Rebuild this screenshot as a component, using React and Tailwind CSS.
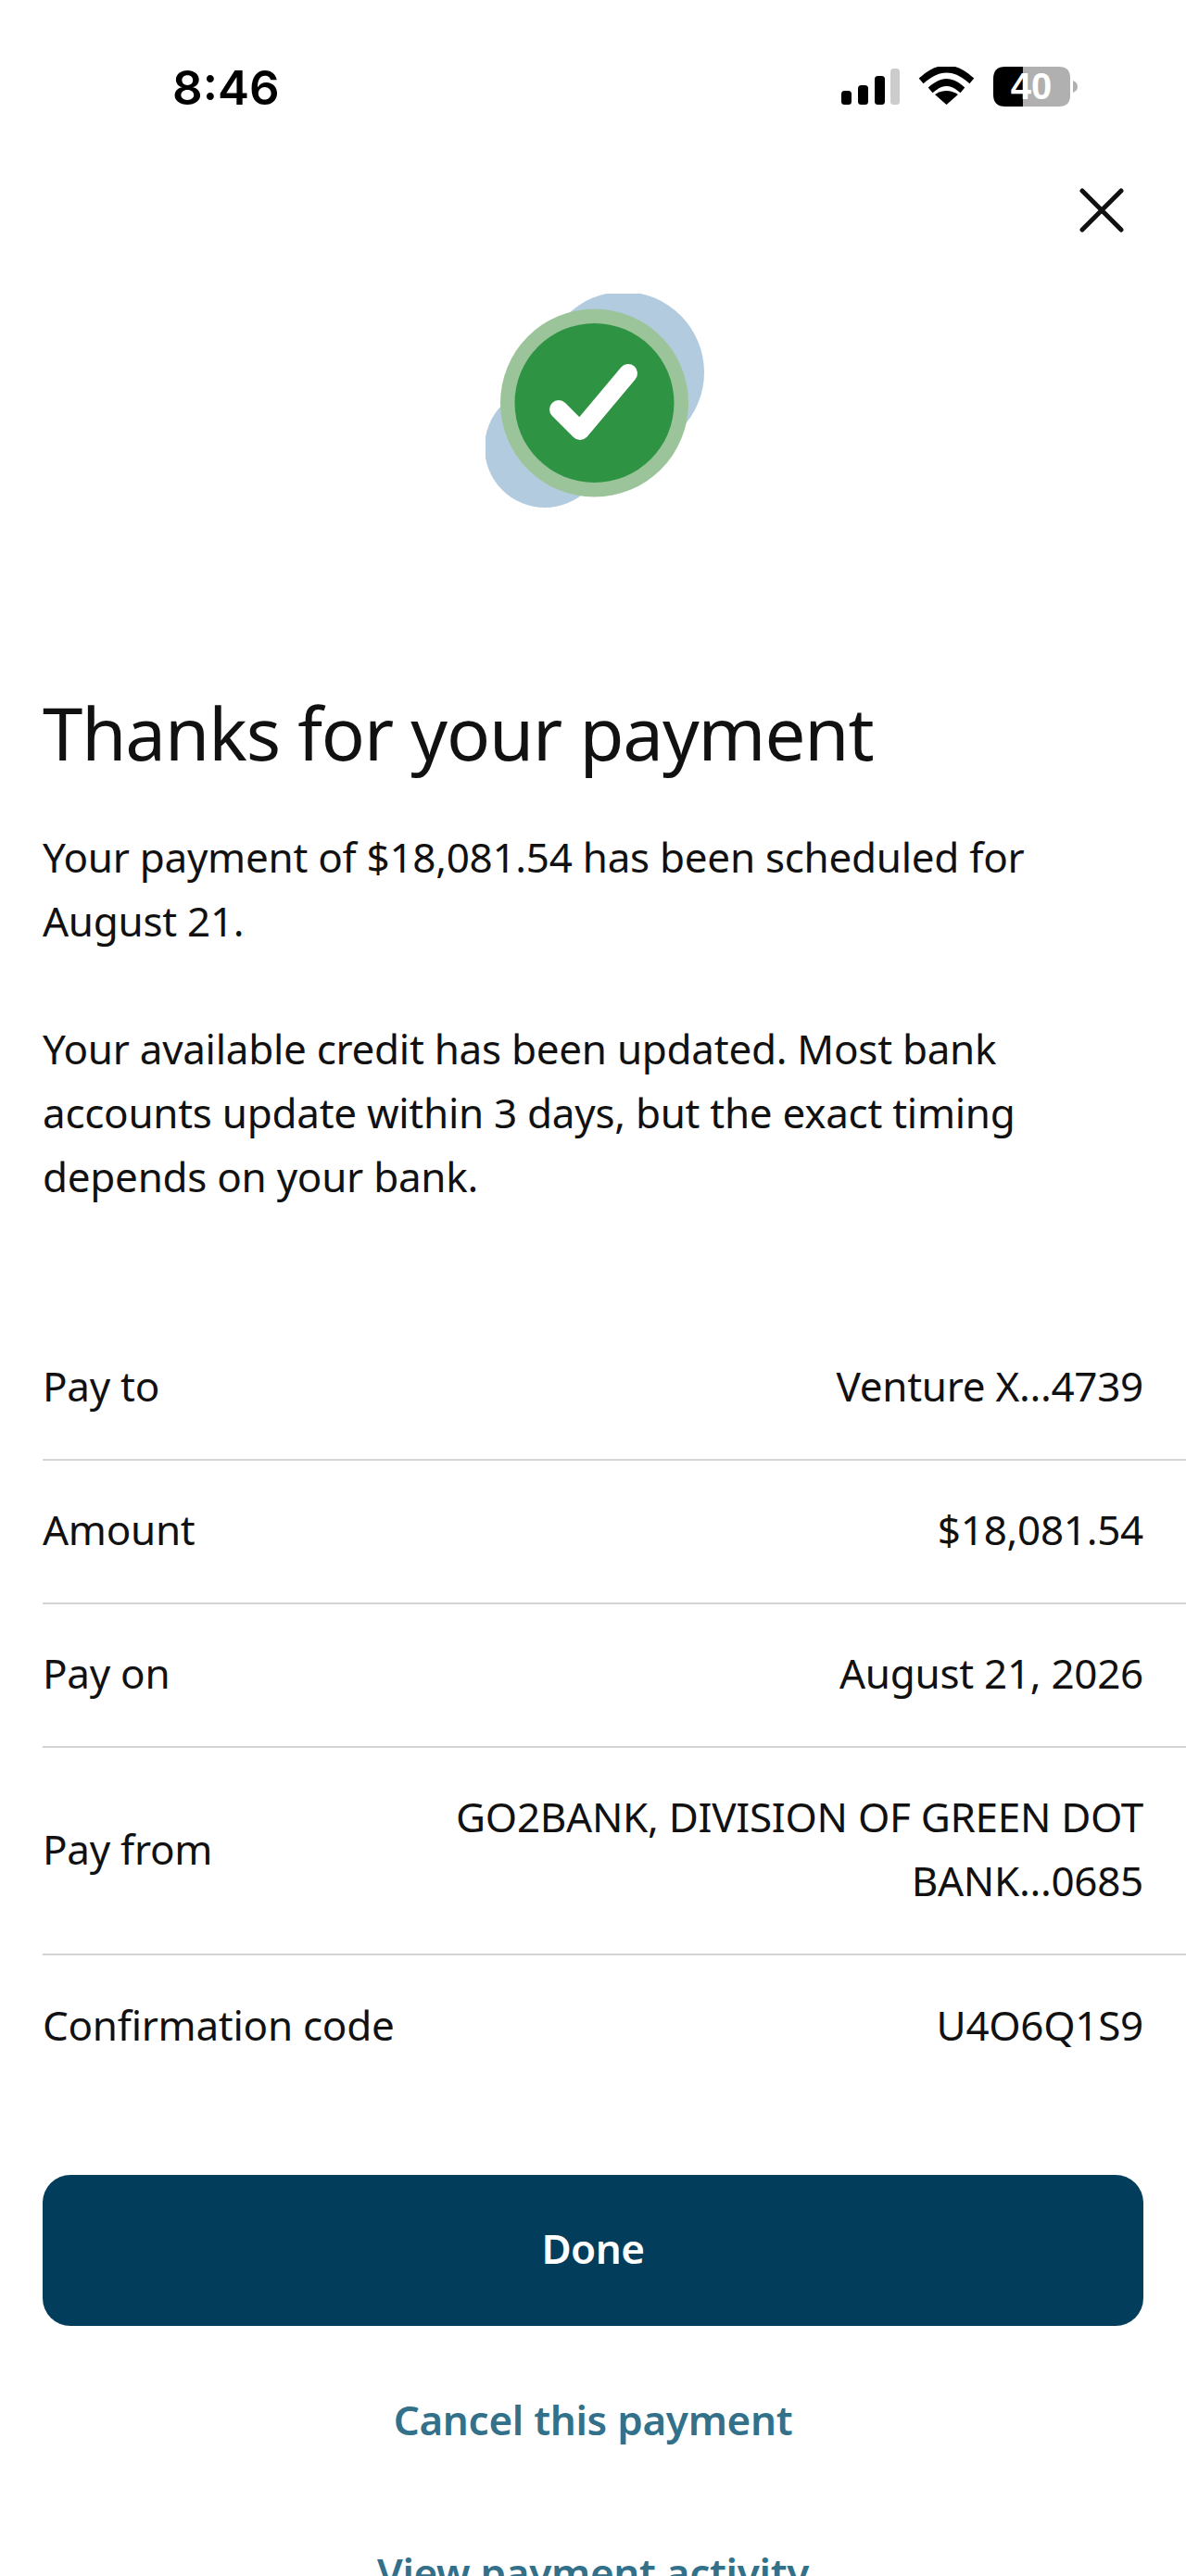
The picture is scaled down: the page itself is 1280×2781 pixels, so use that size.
const rows = [
  { label: "Pay to", value: ["Venture X...4739"], h: "h-[155px]" },
  { label: "Amount", value: ["$18,081.54"], h: "h-[155px]" },
  { label: "Pay on", value: ["August 21, 2026"], h: "h-[155px]" },
  { label: "Pay from", value: ["GO2BANK, DIVISION OF GREEN DOT", "BANK...0685"], h: "h-[224px]" },
  { label: "Confirmation code", value: ["U4O6Q1S9"], h: "h-[155px]" },
];

function StatusIcons() {
  return (
    <svg width="256" height="44" viewBox="908 72 256 44" fill="none">
      <rect x="908" y="98" width="11" height="15" rx="3.5" fill="#000" />
      <rect x="926" y="92" width="11" height="21" rx="3.5" fill="#000" />
      <rect x="944" y="82" width="11" height="31" rx="3.5" fill="#000" />
      <rect x="961" y="74" width="10" height="39" rx="3.5" fill="#cccccc" />
      <path d="M997 85 Q1021.500 64 1046 85" stroke="#000" strokeWidth="7.500" strokeLinecap="square" />
      <path d="M1007 95 Q1021.500 83 1036 95" stroke="#000" strokeWidth="7.500" strokeLinecap="square" />
      <path d="M1021.500 113 L1034 102 Q1021.500 94 1009 102 Z" fill="#000" />
      <path d="M1104 72 H1143 Q1155 72 1155 84 V103 Q1155 115 1143 115 H1104 Z" fill="#b0b0b0" />
      <path d="M1104 72 H1085 Q1072 72 1072 85 V102 Q1072 115 1085 115 H1104 Z" fill="#000" />
      <path d="M1158 87 Q1163 89 1163 93.500 Q1163 98 1158 100 Z" fill="#b0b0b0" />
      <text x="1113" y="107" textAnchor="middle" fontFamily="Liberation Sans, sans-serif" fontWeight="700" fontSize="40" fill="#fff">40</text>
    </svg>
  );
}

function SuccessIcon() {
  return (
    <svg width="240" height="232" viewBox="524 316 240 232">
      <circle cx="673" cy="401" r="87" fill="#b3cbdf" />
      <circle cx="588" cy="482" r="65" fill="#b3cbdf" />
      <circle cx="641.500" cy="434" r="101.500" fill="#9cc49a" />
      <circle cx="641.500" cy="434" r="86" fill="#2f9344" />
      <path d="M603 441 L626 464 L678 402" stroke="#fff" strokeWidth="20" strokeLinecap="round" strokeLinejoin="round" fill="none" />
    </svg>
  );
}

export default function App() {
  return (
    <div className="h-[2781px] w-[1280px] overflow-hidden bg-white font-['Noto_Sans',sans-serif] text-[#111111]">
      <div className="flex h-[116px] items-start justify-between pl-[186px] pr-[116px] pt-[72px]">
        <span className="font-['Inter',sans-serif] text-[51px] font-semibold leading-[46px] text-black">8:46</span>
        <StatusIcons />
      </div>

      <div className="flex justify-end pr-[67px] pt-[87px]">
        <svg width="48" height="48" viewBox="0 0 48 48" fill="none" stroke="#111" strokeWidth="5" strokeLinecap="round">
          <path d="M3 3 L45 45 M45 3 L3 45" />
        </svg>
      </div>

      <div className="flex justify-center pl-[8px] pt-[66px]">
        <SuccessIcon />
      </div>

      <div className="px-[46px] pt-[192px]">
        <h1 className="text-[78px] font-normal leading-[100px] tracking-[-1.1px]">Thanks for your payment</h1>
        <div className="mt-[50px] text-[44px] leading-[69px] tracking-[-0.28px]">
          <p>Your payment of $18,081.54 has been scheduled for<br />August 21.</p>
          <p className="mt-[69px]">Your available credit has been updated. Most bank<br />accounts update within 3 days, but the exact timing<br />depends on your bank.</p>
        </div>
      </div>

      <div className="ml-[46px] mt-[117px]">
        {rows.map((r, i) => (
          <div key={r.label} className={`flex items-center justify-between pb-[4px] pr-[46px] text-[44px] leading-[69px] tracking-[-0.28px] ${r.h} ${i < rows.length - 1 ? "border-b-2 border-[#d4d4d4]" : ""}`}>
            <span>{r.label}</span>
            <span className="text-right">
              {r.value.map((v) => (
                <span key={v} className="block">{v}</span>
              ))}
            </span>
          </div>
        ))}
      </div>

      <div className="px-[46px] pt-[82px]">
        <div className="flex h-[163px] items-center justify-center rounded-[30px] bg-[#023d5b] pb-[6px] text-[44px] font-semibold tracking-[-0.5px] text-white">Done</div>
        <div className="mt-[67px] text-center text-[44px] font-semibold leading-[69px] tracking-[-0.3px] text-[#33708a]">Cancel this payment</div>
        <div className="mt-[96px] text-center text-[44px] font-semibold leading-[69px] tracking-[-0.3px] text-[#33708a]">View payment activity</div>
      </div>
    </div>
  );
}
